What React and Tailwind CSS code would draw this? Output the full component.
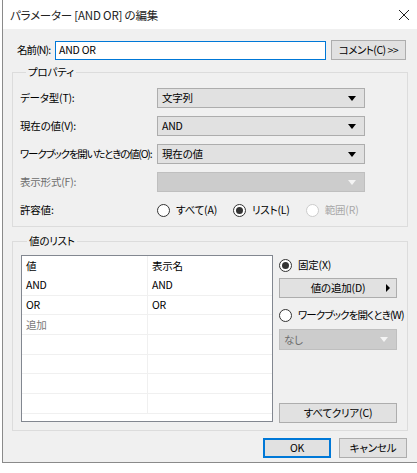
import React from 'react';

const font = "font-['Noto_Sans_CJK_JP','Noto_Sans',sans-serif] [font-feature-settings:'palt']";

function Arrow({ disabled }) {
  return (
    <svg width="8" height="5" viewBox="0 0 8 5" className="shrink-0">
      <path d="M0 0 L8 0 L4 5 Z" fill={disabled ? '#f4f4f4' : '#000'} />
    </svg>
  );
}

function Select({ value, disabled, width = 'w-[208px]' }) {
  return (
    <div
      className={`${width} h-[20px] shrink-0 flex items-center justify-between pl-[4px] pr-[8px] border ${
        disabled ? 'bg-[#cccccc] border-[#bfbfbf] text-[#6d6d6d]' : 'bg-[#e1e1e1] border-[#adadad]'
      }`}
    >
      <span>{value}</span>
      <Arrow disabled={disabled} />
    </div>
  );
}

function Radio({ checked, disabled, label, className = '' }) {
  return (
    <div className={`flex items-center gap-[6px] ${disabled ? 'text-[#a8a8a8]' : ''}`}>
      <span
        className={`w-[13px] h-[13px] shrink-0 rounded-full border flex items-center justify-center bg-white ${
          disabled ? 'border-[#cccccc]' : 'border-[#333333]'
        }`}
      >
        {checked && <span className="w-[7px] h-[7px] rounded-full bg-[#333333]" />}
      </span>
      <span className={className}>{label}</span>
    </div>
  );
}

function Button({ children, className = '', primary }) {
  return (
    <div
      className={`h-[20px] shrink-0 flex items-center justify-center bg-[#e1e1e1] ${
        primary ? 'border-2 border-[#0078d7]' : 'border border-[#adadad]'
      } ${className}`}
    >
      {children}
    </div>
  );
}

const rows = [
  ['AND', 'AND'],
  ['OR', 'OR'],
  ['追加', ''],
  ['', ''],
  ['', ''],
  ['', ''],
  ['', ''],
];

export default function App() {
  return (
    <div className={`w-[417px] h-[473px] bg-white text-[10.5px] leading-[16px] tracking-[-0.2px] whitespace-nowrap text-black overflow-hidden ${font}`}>
      <div className="ml-[2px] w-[415px] h-[463px] border-l border-b border-[#8a8a8a] flex flex-col">
        {/* title bar */}
        <div className="h-[29px] shrink-0 bg-white flex items-center justify-between pl-[7px] pr-[7px]">
          <span className="text-[11.5px] text-[#222]">パラメーター [AND OR] の編集</span>
          <svg width="12" height="12" viewBox="0 0 12 12">
            <path d="M1 1 L11 11 M11 1 L1 11" stroke="#222" strokeWidth="1" />
          </svg>
        </div>

        <div className="flex-1 bg-[#f0f0f0] flex flex-col">
          {/* name row */}
          <div className="mt-[11px] flex items-center pl-[14px]">
            <span className="w-[38px] shrink-0 tracking-[-0.9px]">名前(N):</span>
            <div className="w-[271px] h-[19px] shrink-0 bg-white border border-[#0078d7] flex items-center pl-[3px]">
              AND OR
            </div>
            <Button className="ml-[5px] w-[75px] h-[19px] tracking-[-0.5px]">コメント(C) &gt;&gt;</Button>
          </div>

          {/* properties */}
          <fieldset className="mt-[4px] ml-[9px] w-[396px] h-[163px] shrink-0 border border-[#dcdcdc] pl-[7px] pt-[8px]">
            <legend className="ml-[6px] px-[2px]">プロパティ</legend>
            <div className="flex flex-col gap-[8px]">
              <div className="flex items-center h-[20px]">
                <span className="w-[137px] shrink-0">データ型(T):</span>
                <Select value="文字列" />
              </div>
              <div className="flex items-center h-[20px]">
                <span className="w-[137px] shrink-0">現在の値(V):</span>
                <Select value="AND" />
              </div>
              <div className="flex items-center h-[20px]">
                <span className="w-[137px] shrink-0 tracking-[-1.2px]">ワークブックを開いたときの値(O):</span>
                <Select value="現在の値" />
              </div>
              <div className="flex items-center h-[20px]">
                <span className="w-[137px] shrink-0 text-[#6d6d6d]">表示形式(F):</span>
                <Select value="" disabled />
              </div>
              <div className="flex items-center h-[20px]">
                <span className="w-[137px] shrink-0">許容値:</span>
                <div className="flex items-center gap-[16px]">
                  <Radio label="すべて(A)" />
                  <Radio label="リスト(L)" checked />
                  <Radio label="範囲(R)" disabled />
                </div>
              </div>
            </div>
          </fieldset>

          {/* value list */}
          <fieldset className="mt-[6px] ml-[9px] w-[396px] h-[198px] shrink-0 border border-[#dcdcdc] pl-[8px] pt-[6px]">
            <legend className="ml-[6px] px-[2px]">値のリスト</legend>
            <div className="flex">
              <div className="w-[252px] h-[167px] shrink-0 bg-white border border-[#828790] overflow-hidden">
                <div className="grid grid-cols-[126px_1fr] h-[20px]">
                  <div className="pl-[4px] flex items-center border-r border-[#f0f0f0]">値</div>
                  <div className="pl-[4px] flex items-center">表示名</div>
                </div>
                {rows.map((r, i) => (
                  <div key={i} className="grid grid-cols-[126px_1fr] h-[19.7px] border-b border-[#f0f0f0]">
                    <div className={`pl-[4px] flex items-center border-r border-[#f0f0f0] ${r[0] === '追加' ? 'text-[#7a7a7a]' : ''}`}>
                      {r[0]}
                    </div>
                    <div className="pl-[4px] flex items-center">{r[1]}</div>
                  </div>
                ))}
              </div>

              <div className="ml-[6px] w-[118px] shrink-0 flex flex-col">
                <div className="mt-[2px]">
                  <Radio label="固定(X)" checked />
                </div>
                <Button className="mt-[5px] relative">
                  <span>値の追加(D)</span>
                  <svg width="4" height="8" viewBox="0 0 4 8" className="absolute right-[6px] top-[5px]">
                    <path d="M0 0 L4 4 L0 8 Z" fill="#000" />
                  </svg>
                </Button>
                <div className="mt-[9px]">
                  <Radio label="ワークブックを開くとき(W)" className="tracking-[-0.9px]" />
                </div>
                <div className="mt-[6px]">
                  <Select value="なし" disabled width="w-[118px] h-[21px]" />
                </div>
                <Button className="mt-[53px]">すべてクリア(C)</Button>
              </div>
            </div>
          </fieldset>

          {/* bottom buttons */}
          <div className="mt-[7px] flex pl-[260px] gap-[8px]">
            <Button primary className="w-[68px]">OK</Button>
            <Button className="w-[68px]">キャンセル</Button>
          </div>
        </div>
      </div>
    </div>
  );
}
